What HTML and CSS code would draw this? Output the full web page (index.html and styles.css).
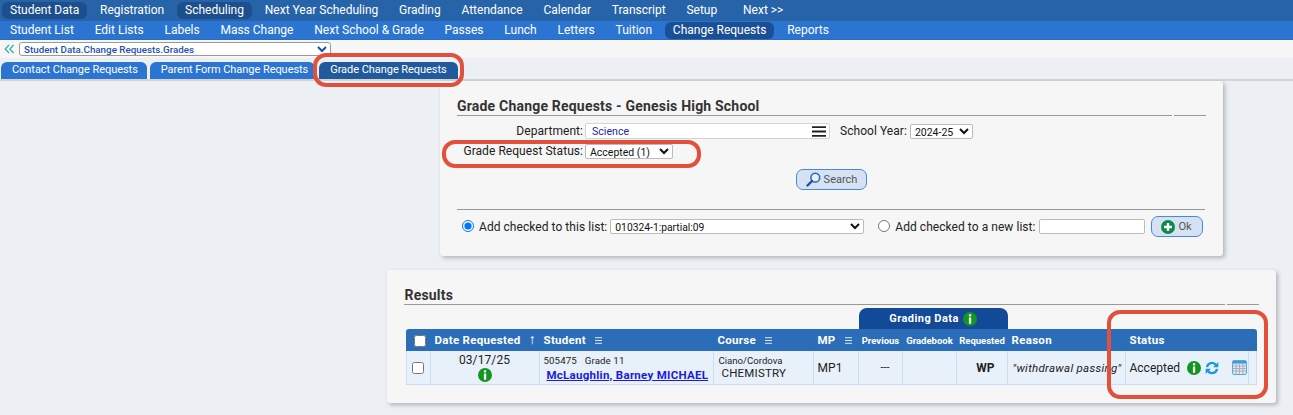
FILE: index.html
```html
<!DOCTYPE html>
<html lang="en">
<head>
<meta charset="utf-8">
<title>Grade Change Requests</title>
<link rel="stylesheet" href="styles.css">
</head>
<body>
<svg class="defs" width="0" height="0" aria-hidden="true">
  <symbol id="info" viewBox="0 0 14 14"><circle cx="7" cy="7" r="7" fill="#12961f"/><rect x="5.9" y="2.2" width="2.3" height="2.2" rx=".6" fill="#fff"/><rect x="5.9" y="5.4" width="2.3" height="6.3" rx=".4" fill="#fff"/></symbol>
  <symbol id="lines" viewBox="0 0 7 7"><path d="M0 .7h7M0 3.500h7M0 6.300h7" stroke="#dfe9f6" stroke-width="1"/></symbol>
</svg>
<nav class="nav-top">
  <a class="nav-item pill">Student Data</a>
  <a class="nav-item">Registration</a>
  <a class="nav-item pill">Scheduling</a>
  <a class="nav-item">Next Year Scheduling</a>
  <a class="nav-item">Grading</a>
  <a class="nav-item">Attendance</a>
  <a class="nav-item">Calendar</a>
  <a class="nav-item">Transcript</a>
  <a class="nav-item">Setup</a>
  <a class="nav-item next">Next &gt;&gt;</a>
</nav>
<nav class="nav-sub">
  <a class="nav-item">Student List</a>
  <a class="nav-item">Edit Lists</a>
  <a class="nav-item">Labels</a>
  <a class="nav-item">Mass Change</a>
  <a class="nav-item">Next School &amp; Grade</a>
  <a class="nav-item">Passes</a>
  <a class="nav-item">Lunch</a>
  <a class="nav-item">Letters</a>
  <a class="nav-item">Tuition</a>
  <a class="nav-item pill">Change Requests</a>
  <a class="nav-item">Reports</a>
</nav>
<div class="crumb">
  <svg class="collapse" width="11" height="10" viewBox="0 0 11 10"><path d="M5 1 1.2 5 5 9M9.6 1 5.800 5l3.800 4" fill="none" stroke="#2bb09a" stroke-width="1.2"/></svg>
  <select class="crumb-select"><option>Student Data.Change Requests.Grades</option></select>
</div>
<div class="tabs">
  <a class="tab">Contact Change Requests</a>
  <a class="tab tab-two">Parent Form Change Requests</a>
  <a class="tab active">Grade Change Requests</a>
</div>
<main class="main">
  <section class="panel panel-form">
    <div class="title-row">
      <h2 class="title">Grade Change Requests - Genesis High School</h2>
      <span class="title-end"></span>
    </div>
    <div class="form-row first-row">
      <label class="form-label">Department:</label>
      <div class="multi">
        <span class="multi-text">Science</span>
        <svg width="14" height="11" viewBox="0 0 14 11"><path d="M0 1.2h14M0 5.500h14M0 9.800h14" stroke="#222" stroke-width="1.8"/></svg>
      </div>
      <label class="year-label">School Year:</label>
      <select class="select year"><option>2024-25</option></select>
    </div>
    <div class="form-row status-row">
      <label class="form-label">Grade Request Status:</label>
      <select class="select status"><option>Accepted (1)</option></select>
    </div>
    <div class="search-row">
      <button class="btn search-btn" type="button">
        <svg width="15" height="15" viewBox="0 0 15 15"><circle cx="9.300" cy="5.700" r="4.400" fill="#e6f0fb" stroke="#2a62b4" stroke-width="1.5"/><path d="M6 9 1.500 13.500" stroke="#1d4f9e" stroke-width="2.400" stroke-linecap="round"/></svg>
        Search
      </button>
    </div>
    <div class="list-row">
      <input class="radio" type="radio" name="list" checked>
      <label class="list-label">Add checked to this list:</label>
      <select class="select list-select"><option>010324-1:partial:09</option></select>
      <input class="radio radio-two" type="radio" name="list">
      <label class="list-label">Add checked to a new list:</label>
      <input class="text-input" type="text">
      <button class="btn ok-btn" type="button">
        <svg width="14" height="14" viewBox="0 0 14 14"><circle cx="7" cy="7" r="7" fill="#0c8a4a"/><path d="M7 3v8M3 7h8" stroke="#fff" stroke-width="2.400"/></svg>
        Ok
      </button>
    </div>
  </section>

  <section class="panel panel-results">
    <div class="title-row results-title">
      <h2 class="title">Results</h2>
      <span class="title-end"></span>
    </div>
    <div class="grading-wrap">
      <div class="grading-tab">Grading Data <svg class="i14" viewBox="0 0 14 14"><use href="#info"/></svg></div>
    </div>
    <table class="grid">
      <colgroup>
        <col class="c-check"><col class="c-date"><col class="c-student"><col class="c-course"><col class="c-mp"><col class="c-prev"><col class="c-book"><col class="c-req"><col class="c-reason"><col class="c-status"><col class="c-end">
      </colgroup>
      <thead>
        <tr>
          <th class="center"><input class="check head-check" type="checkbox"></th>
          <th>Date Requested <span class="sort">↑</span></th>
          <th>Student <svg class="menu" viewBox="0 0 7 7"><use href="#lines"/></svg></th>
          <th>Course <svg class="menu" viewBox="0 0 7 7"><use href="#lines"/></svg></th>
          <th>MP <svg class="menu" viewBox="0 0 7 7"><use href="#lines"/></svg></th>
          <th class="small center">Previous</th>
          <th class="small center">Gradebook</th>
          <th class="small center">Requested</th>
          <th>Reason</th>
          <th colspan="2">Status</th>
        </tr>
      </thead>
      <tbody>
        <tr>
          <td class="center"><input class="check" type="checkbox"></td>
          <td class="center date-cell">03/17/25<svg class="i14 block" viewBox="0 0 14 14"><use href="#info"/></svg></td>
          <td class="student-cell"><div class="student-meta"><span>505475</span><span>Grade 11</span></div><a class="student-link">McLaughlin, Barney MICHAEL</a></td>
          <td class="course-cell"><div class="teacher">Ciano/Cordova</div><div class="course-name">CHEMISTRY</div></td>
          <td class="mp-cell">MP1</td>
          <td class="prev-cell">---</td>
          <td></td>
          <td class="req-cell">WP</td>
          <td class="reason-cell">"withdrawal passing"</td>
          <td class="status-cell">
            <div class="status-inner">Accepted
              <svg class="i14 gap-a" viewBox="0 0 14 14"><use href="#info"/></svg>
              <svg class="gap-b" width="14" height="14" viewBox="0 0 14 14"><path d="M2 6.200A5 5 0 0 1 11 4" fill="none" stroke="#1b97e0" stroke-width="2.400"/><path d="M13.300 1v5.200H8.100z" fill="#1b97e0"/><path d="M12 7.800A5 5 0 0 1 3 10" fill="none" stroke="#1b97e0" stroke-width="2.400"/><path d="M.7 13V7.800h5.200z" fill="#1b97e0"/></svg>
              <svg class="gap-c" width="15" height="15" viewBox="0 0 15 15"><rect x=".5" y=".5" width="14" height="14" rx="1.500" fill="#dfe6ee" stroke="#5aa9dc"/><rect x="1" y="1" width="13" height="2.600" fill="#3f9bd8"/><path d="M1 6h13M1 8.500h13M1 11h13M4 4v10M7.500 4v10M11 4v10" stroke="#9aa6b4" stroke-width=".8"/></svg>
            </div>
          </td>
          <td></td>
        </tr>
      </tbody>
    </table>
  </section>
</main>
<div class="mark mark-tab"></div>
<div class="mark mark-status"></div>
<div class="mark mark-col"></div>
</body>
</html>
```

FILE: styles.css
```css
* { box-sizing: border-box; }
html, body { margin: 0; height: 415px; overflow: hidden; }
body { position: relative; background: #eceff4; font-family: Roboto, "Liberation Sans", sans-serif; font-size: 12px; color: #222; letter-spacing: .05px; }
.defs { position: absolute; }

.nav-top, .nav-sub { display: flex; align-items: center; padding-left: 2px; color: #fff; }
.nav-top { height: 21px; background: #2763a8; }
.nav-sub { height: 19px; background: #2b74d1; border-bottom: 1px solid #2b6cc0; }
.nav-item { padding: 0 8px; margin-right: 4.800px; line-height: 17px; border-radius: 6px; white-space: nowrap; letter-spacing: 0; }
.nav-item.pill { background: #1d4f8c; }
.nav-sub .nav-item.pill { background: #1b4f95; }
.nav-item.next { margin-left: 5px; }

.crumb { height: 18px; background: #f6f6f6; display: flex; align-items: center; padding-left: 4px; gap: 4px; }
.crumb-select { width: 312px; height: 14px; padding: 0; font: 500 9.800px Roboto, sans-serif; color: #1f4fa8; background: #fff; border: 1px solid #999; border-radius: 3px; }

.tabs { height: 23px; background: #eceff4; border-bottom: 2px solid #d4d4d4; display: flex; align-items: flex-end; padding-left: 1px; }
.tab { height: 17px; line-height: 16px; padding: 0 9px 0 11px; background: #2b74d1; color: #fff; border-radius: 6px 6px 0 0; white-space: nowrap; font-size: 11px; letter-spacing: -.05px; margin-right: 3px; }
.tab.tab-two { padding-right: 7px; }
.tab.active { background: #215a9c; margin-left: 1px; padding-right: 11px; }

.main { display: flex; flex-direction: column; align-items: center; padding-left: 369px; }
.panel { background: #f6f6f6; border-radius: 3px; box-shadow: 2px 2px 4px rgba(0,0,0,.25); }
.panel-form { width: 783px; height: 175px; padding: 17px 17px 0; margin-left: 1px; }
.panel-results { width: 889px; height: 133px; padding: 17px 17px 0; margin-top: 14px; }

.title-row { display: flex; gap: 2px; height: 18px; }
.title { flex: 1; margin: 0; font-size: 14px; font-weight: 700; line-height: 16px; color: #333; border-bottom: 1px solid #999; letter-spacing: .2px; }
.title-end { width: 32px; border-bottom: 1px solid #999; }

.form-row { display: flex; align-items: center; }
.first-row { margin-top: 7px; height: 16px; }
.status-row { margin-top: 5px; height: 14px; }
.form-label { width: 126px; text-align: right; margin-right: 2px; white-space: nowrap; flex: none; }
.multi { width: 245px; height: 16px; background: #fff; border: 1px solid #d4d4d4; border-radius: 2px; display: flex; justify-content: space-between; align-items: center; padding: 0 3px 0 6px; font-size: 10.500px; color: #2222aa; flex: none; }
.year-label { margin: 0 3px 0 10px; white-space: nowrap; }
.select { font: 10.500px Roboto, sans-serif; color: #111; background: #fff; border: 1px solid #bbb; border-radius: 2px; padding: 0; height: 15px; flex: none; }
.year { width: 63px; }
.status { width: 88px; }

.search-row { display: flex; padding-left: 339px; margin-top: 11px; }
.btn { display: flex; align-items: center; justify-content: center; gap: 3px; background: #d4e2f3; border: 1px solid #4a87d8; border-radius: 7px; color: #555; font: 11px Roboto, sans-serif; padding: 0; flex: none; }
.search-btn { width: 71px; height: 21px; }
.ok-btn { width: 52px; height: 21px; }

.list-row { display: flex; align-items: center; height: 29px; margin-top: 19px; border-top: 1px solid #999; width: 748px; padding-top: 5px; }
.radio { margin: 0 5px 0 5px; width: 12px; height: 12px; flex: none; transform: translateY(-1px); }
.radio-two { margin: 0 5px 0 14px; }
.list-label { white-space: nowrap; margin-right: 3px; letter-spacing: .05px; flex: none; }
.list-select { width: 254px; font-size: 10.300px; }
.text-input { width: 106px; height: 15px; background: #fff; border: 1px solid #bbb; border-radius: 2px; padding: 0; margin-right: 6px; flex: none; }

.results-title .title { padding-left: 1px; }
.grading-wrap { height: 25px; padding-left: 453px; display: flex; align-items: flex-end; margin-left: 2px; margin-top: -1px; }
.grading-tab { width: 149px; height: 21px; background: #134a98; color: #fff; border-radius: 8px 8px 0 0; display: flex; align-items: center; justify-content: center; gap: 4px; font-weight: 700; font-size: 11px; letter-spacing: .45px; }
.i14 { width: 14px; height: 14px; flex: none; }
.block { display: block; margin: 0 auto; }

.grid { width: 851px; margin-left: 2px; border-collapse: separate; border-spacing: 0; table-layout: fixed; }
.c-check { width: 25px; } .c-date { width: 109px; } .c-student { width: 174px; } .c-course { width: 100px; } .c-mp { width: 45px; } .c-prev { width: 44px; } .c-book { width: 54px; } .c-req { width: 51px; } .c-reason { width: 118px; } .c-status { width: 123px; } .c-end { width: 8px; }
.grid th { height: 22px; background: #2c6dba; color: #fff; font-size: 11.500px; font-weight: 700; text-align: left; padding: 0 0 0 4px; white-space: nowrap; letter-spacing: .3px; }
.grid th:first-child { border-radius: 3px 0 0 0; }
.grid th:last-child { border-radius: 0 3px 0 0; }
.grid th.small { font-size: 9.500px; padding: 0; letter-spacing: 0; }
.grid th.center, .center { text-align: center; }
.sort { margin-left: 5px; font-weight: 400; font-size: 14px; line-height: 0; }
.menu { width: 7px; height: 7px; margin-left: 6px; }
.grid td { height: 34px; background: #e8f1fa; border-right: 1px solid #c9def2; border-bottom: 1px solid #c9def2; padding: 0 0 0 4px; font-size: 12px; color: #222; white-space: nowrap; overflow: hidden; }
.grid td:first-child { border-left: 1px solid #c9def2; padding: 0; }
.grid td.center { padding: 0; }
.check { width: 12px; height: 12px; margin: 0; vertical-align: middle; }
.date-cell { line-height: 15px; letter-spacing: .1px; }
.student-meta { display: flex; gap: 8px; font-size: 9.700px; line-height: 14px; letter-spacing: .1px; }
.student-link { display: block; padding-left: 3px; color: #1a1ae0; font-weight: 700; font-size: 11.500px; line-height: 14px; text-decoration: underline; letter-spacing: .27px; }
.grid td.course-cell { padding: 0 0 2px 5px; }
.teacher { font-size: 9.600px; line-height: 13px; letter-spacing: 0; }
.course-name { font-size: 11.500px; line-height: 13px; padding-left: 3px; letter-spacing: .2px; }
.grid td.mp-cell { padding-left: 4px; }
.grid td.prev-cell { padding-left: 22px; font-size: 11px; letter-spacing: 0; }
.grid td.req-cell { font-weight: 700; text-align: right; padding-right: 12px; }
.grid td.reason-cell { font-style: italic; font-size: 11.500px; letter-spacing: .3px; padding-left: 5px; }
.grid td.status-cell { padding-left: 4px; }
.status-inner { display: flex; align-items: center; letter-spacing: 0; }
.gap-a { margin-left: 7px; }
.gap-b { margin-left: 4px; }
.gap-c { margin-left: 13px; }

.mark { position: absolute; border: 4px solid #e2503c; pointer-events: none; }
.mark-tab { left: 313px; top: 53px; width: 151px; height: 34px; border-radius: 13px; }
.mark-status { left: 442px; top: 140px; width: 259px; height: 28px; border-radius: 13px; }
.mark-col { left: 1107px; top: 310px; width: 161px; height: 89px; border-radius: 13px; }
```
